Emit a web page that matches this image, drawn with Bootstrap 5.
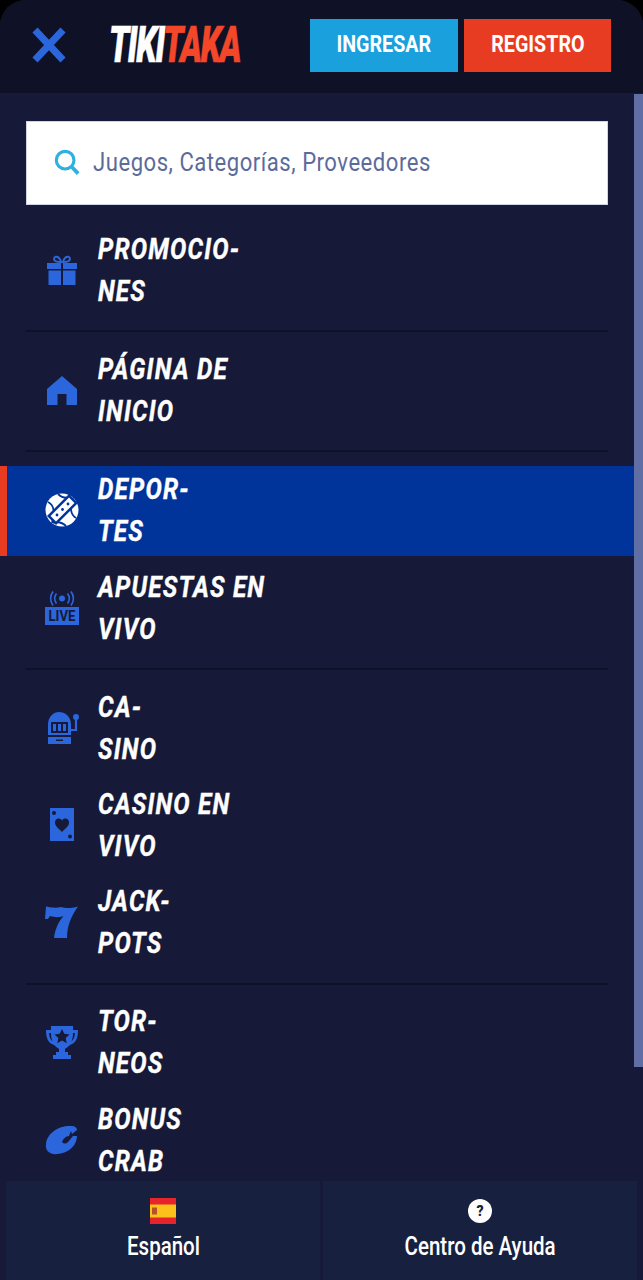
<!DOCTYPE html>
<html lang="es">
<head>
    <meta charset="UTF-8">
    <meta name="viewport" content="width=device-width, initial-scale=1">
    <title>TikiTaka</title>
    <link href="https://cdn.jsdelivr.net/npm/bootstrap@5.3.3/dist/css/bootstrap.min.css" rel="stylesheet">
    <style>
        html, body { height: 100%; background: #000; }
        body { font-family: Roboto, "Liberation Sans", sans-serif; overflow: hidden; }

        /* Roboto Condensed is not installed: squeeze Roboto instead */
        .squeeze { display: inline-block; transform: scaleX(.82); transform-origin: left center; white-space: nowrap; }
        .squeeze-mid { transform-origin: center center; }

        .app-shell { width: 643px; height: 1280px; background: #161a38; border-radius: 26px 26px 0 0; overflow: hidden; position: relative; }

        /* header */
        .top-bar { height: 93px; background: #0f1226; padding: 19px 32px 21px 32px; }
        .close-btn { width: 34px; height: 36px; margin-top: 8px; }
        .brand { width: 200px; padding-left: 43px; margin-top: 1px; font-size: 50px; line-height: 50px; font-weight: 900; font-style: italic; letter-spacing: -2px; -webkit-text-stroke: .6px currentColor; }
        .brand-inner { transform: scaleX(.66); }
        .brand-a { color: #fff; }
        .brand-b { color: #f4472a; }
        .top-btn { height: 53px; border: 0; border-radius: 0; color: #fff; font-size: 24px; font-weight: 700; padding: 0 0 4px 0; }
        .btn-in { width: 148px; margin-left: auto; background: #1aa0dc; }
        .btn-reg { width: 147px; margin-left: 6px; margin-right: 0; background: #e83c22; }

        /* menu */
        .side-wrap { height: 1187px; }
        .side-main { flex: 1; min-width: 0; }
        .scroll-thumb { width: 9px; height: 973px; background: #5f6ea5; flex: none; margin-top: 1px; }
        .search-box { height: 84px; margin: 28px 26px 21px 26px; padding: 0 0 2px 27px; background: #fff; border: 1px solid #cfd5e6; color: #5c6b9c; font-size: 26px; }
        .search-box svg { margin-right: 13px; flex: none; }
        .search-text { transform: scaleX(.85); letter-spacing: .6px; }
        .side-link { height: 90px; padding: 0 0 2px 38px; border-left: 7px solid transparent; color: #fff; font-size: 29px; line-height: 42px; font-weight: 700; font-style: italic; margin-bottom: 7.4px; }
        .side-link .squeeze { transform: scaleX(.84); letter-spacing: 1.4px; -webkit-text-stroke: .4px #fff; }
        .side-link:hover, .side-link:focus { color: #fff; }
        .side-link.on { background: #00349b; border-left-color: #e83c22; }
        .side-link svg { width: 34px; height: 34px; flex: none; margin-right: 19px; color: #2b66dc; }
        .side-link.on svg { color: #fff; }
        .live-txt { font-style: normal; }
        .side-sep { height: 2px; background: #0e1127; margin: 7px 26px 13.7px 26px; flex: none; }

        /* footer */
        .foot-bar { position: absolute; left: 6px; right: 6px; top: 1181px; height: 99px; gap: 3px; }
        .foot-cell { flex: 1; background: #17213f; color: #fff; font-size: 25px; font-weight: 500; line-height: 30px; padding-top: 17px; text-align: center; text-decoration: none; }
        .foot-ico { height: 26px; margin-bottom: 8px; }
        .foot-ico svg { display: block; margin: 0 auto; }
    </style>
</head>
<body>

<div class="app-shell">
    <header class="top-bar d-flex align-items-start">
        <svg class="close-btn" viewBox="0 0 34 36" aria-label="Cerrar"><path d="M3 3 L31 33 M31 3 L3 33" stroke="#2b66dc" stroke-width="7" fill="none"/></svg>
        <div class="brand"><span class="squeeze brand-inner"><span class="brand-a">TIKI</span><span class="brand-b">TAKA</span></span></div>
        <button class="btn top-btn btn-in"><span class="squeeze squeeze-mid">INGRESAR</span></button>
        <button class="btn top-btn btn-reg"><span class="squeeze squeeze-mid">REGISTRO</span></button>
    </header>

    <div class="side-wrap d-flex">
        <div class="side-main">
            <div class="search-box d-flex align-items-center">
                <svg width="26" height="26" viewBox="0 0 28 28"><circle cx="12" cy="12" r="9.500" fill="none" stroke="#2fb0e0" stroke-width="3.400"/><path d="M18.5 18.500 L26 26.500" stroke="#2fb0e0" stroke-width="4"/></svg>
                <span class="squeeze search-text">Juegos, Categorías, Proveedores</span>
            </div>

            <nav class="nav flex-column flex-nowrap">
                <a class="nav-link side-link d-flex align-items-center" href="#">
                    <svg viewBox="0 0 34 34"><path fill="currentColor" d="M2 10h14v6H2zM18 10h14v6H18zM3.500 17.500H16V32H3.500zM18 17.500h12.500V32H18z"/><path fill="none" stroke="currentColor" stroke-width="2" d="M16 9c-3 0-7-.5-7-3s3-3 4.500-1.500S16 7 16 9zM18 9c3 0 7-.5 7-3s-3-3-4.500-1.500S18 7 18 9z"/></svg>
                    <span class="squeeze">PROMOCIO-<br>NES</span>
                </a>
                <div class="side-sep"></div>
                <a class="nav-link side-link d-flex align-items-center" href="#">
                    <svg viewBox="0 0 34 34"><path fill="currentColor" d="M17 3 L32 16 V32 H21.500 V21 H12.500 V32 H2 V16 Z"/></svg>
                    <span class="squeeze">PÁGINA DE<br>INICIO</span>
                </a>
                <div class="side-sep"></div>
                <a class="nav-link side-link on d-flex align-items-center" href="#">
                    <svg viewBox="0 0 34 34"><circle cx="17" cy="17" r="16.500" fill="currentColor"/><path fill="none" stroke="#00349b" stroke-width="1.800" d="M3 9 C9 12 10 20 7 30 M13 1 C16 4 20 6 26 4 M31 25 C26 22 24 15 28 5 M21 33 C18 30 14 28 8 30"/><path fill="#00349b" d="M2 23 L24 1 L33 10 L11 32 Z"/><path fill="currentColor" d="M5.500 23 L24 4.500 L29.500 10 L11 28.500 Z"/><circle cx="12" cy="22" r="1.400" fill="#00349b"/><circle cx="17.500" cy="16.500" r="1.400" fill="#00349b"/><circle cx="23" cy="11" r="1.400" fill="#00349b"/></svg>
                    <span class="squeeze">DEPOR-<br>TES</span>
                </a>
                <a class="nav-link side-link d-flex align-items-center" href="#">
                    <svg viewBox="0 0 34 34"><circle cx="17" cy="7.500" r="3" fill="currentColor"/><path fill="none" stroke="currentColor" stroke-width="1.800" d="M11.500 2.500a8 8 0 0 0 0 10M22.500 2.500a8 8 0 0 1 0 10M8 .5a12 12 0 0 0 0 14M26 .5a12 12 0 0 1 0 14"/><rect x="0" y="16" width="34" height="18" fill="currentColor"/><text class="live-txt" x="17" y="30" text-anchor="middle" font-family="Roboto, sans-serif" font-weight="700" font-size="14" fill="#161a38" textLength="27" lengthAdjust="spacingAndGlyphs">LIVE</text></svg>
                    <span class="squeeze">APUESTAS EN<br>VIVO</span>
                </a>
                <div class="side-sep"></div>
                <a class="nav-link side-link d-flex align-items-center" href="#">
                    <svg viewBox="0 0 34 34"><path fill="currentColor" d="M3 14 C3 5 9 1 14 1 C20 1 26 5 26 14 V24 H3 Z M3 26 H26 V33 H3 Z"/><rect x="6" y="11" width="17" height="11" fill="#161a38"/><path fill="currentColor" d="M8 13h3v7H8zM13 13h3v7h-3zM18 13h3v7h-3z"/><path fill="#161a38" d="M11 28.500h7V30h-7z"/><circle cx="31" cy="6" r="3" fill="currentColor"/><path fill="none" stroke="currentColor" stroke-width="2.200" d="M31 8v11h-5"/></svg>
                    <span class="squeeze">CA-<br>SINO</span>
                </a>
                <a class="nav-link side-link d-flex align-items-center" href="#">
                    <svg viewBox="0 0 34 34"><rect x="5" y="0" width="24" height="33" fill="currentColor"/><path fill="#161a38" d="M17 24 C13 20 10 18 10 14.500 C10 10 15 9.500 17 12.500 C19 9.500 24 10 24 14.500 C24 18 21 20 17 24 Z"/><circle cx="9" cy="5" r="2" fill="#161a38"/><circle cx="25" cy="28.500" r="2" fill="#161a38"/></svg>
                    <span class="squeeze">CASINO EN<br>VIVO</span>
                </a>
                <a class="nav-link side-link d-flex align-items-center" href="#">
                    <svg viewBox="0 0 34 34"><path fill="currentColor" d="M1 1.500 C8 3 12 3 16 2 C21 4 27 3 33 1.500 C27 10 22 20 22 33 H9 C10 24 14 16 18.500 11 C13 13 9 12 5 11 L3 14 L0 14 Z"/></svg>
                    <span class="squeeze">JACK-<br>POTS</span>
                </a>
                <div class="side-sep"></div>
                <a class="nav-link side-link d-flex align-items-center" href="#">
                    <svg viewBox="0 0 34 34"><path fill="currentColor" d="M6 1h22v4h5c0 8-2 13-8 15-2 2-4 3-5 4v3h3v3H11v-3h3v-3c-1-1-3-2-5-4C3 18 1 13 1 5h5zM4 8c.3 4 1.500 7 3.500 8.500C6.500 14 6 11 6 8zM30 8h-2c0 3-.5 6-1.500 8.500C28.500 15 29.700 12 30 8z"/><rect x="8" y="30" width="18" height="4" fill="currentColor"/><path fill="#161a38" d="M17 4l2.300 4.800 5.200.6-3.800 3.600 1 5.200-4.700-2.600-4.700 2.600 1-5.200-3.800-3.600 5.200-.6z"/></svg>
                    <span class="squeeze">TOR-<br>NEOS</span>
                </a>
                <a class="nav-link side-link d-flex align-items-center" href="#">
                    <svg viewBox="0 0 34 34"><path fill="currentColor" d="M1 21 C2 10 14 2 27 3 C30 3 32 5 32 7 L27 11 L26 8 L24 13 C21 13 18 16 17 19 C19 21 21 21 23 19 L28 13 L32 13 C32 22 24 30 13 31 C5 32 0 28 1 21 Z"/></svg>
                    <span class="squeeze">BONUS<br>CRAB</span>
                </a>
            </nav>
        </div>
        <div class="scroll-thumb"></div>
    </div>

    <footer class="foot-bar d-flex">
        <a class="foot-cell" href="#">
            <div class="foot-ico"><svg width="26" height="26" viewBox="0 0 26 26"><rect width="26" height="26" fill="#e7232b"/><rect y="6.500" width="26" height="13" fill="#fbc21b"/><rect x="2" y="9.500" width="5" height="7" fill="#b5502a"/></svg></div>
            <span class="squeeze squeeze-mid">Español</span>
        </a>
        <a class="foot-cell" href="#">
            <div class="foot-ico"><svg width="26" height="26" viewBox="0 0 26 26"><circle cx="13" cy="13" r="12" fill="#fff"/><text x="13" y="18" text-anchor="middle" font-family="Roboto, sans-serif" font-weight="900" font-size="14" fill="#17213f">?</text></svg></div>
            <span class="squeeze squeeze-mid">Centro de Ayuda</span>
        </a>
    </footer>
</div>

<script src="https://cdn.jsdelivr.net/npm/bootstrap@5.3.3/dist/js/bootstrap.bundle.min.js"></script>
</body>
</html>
